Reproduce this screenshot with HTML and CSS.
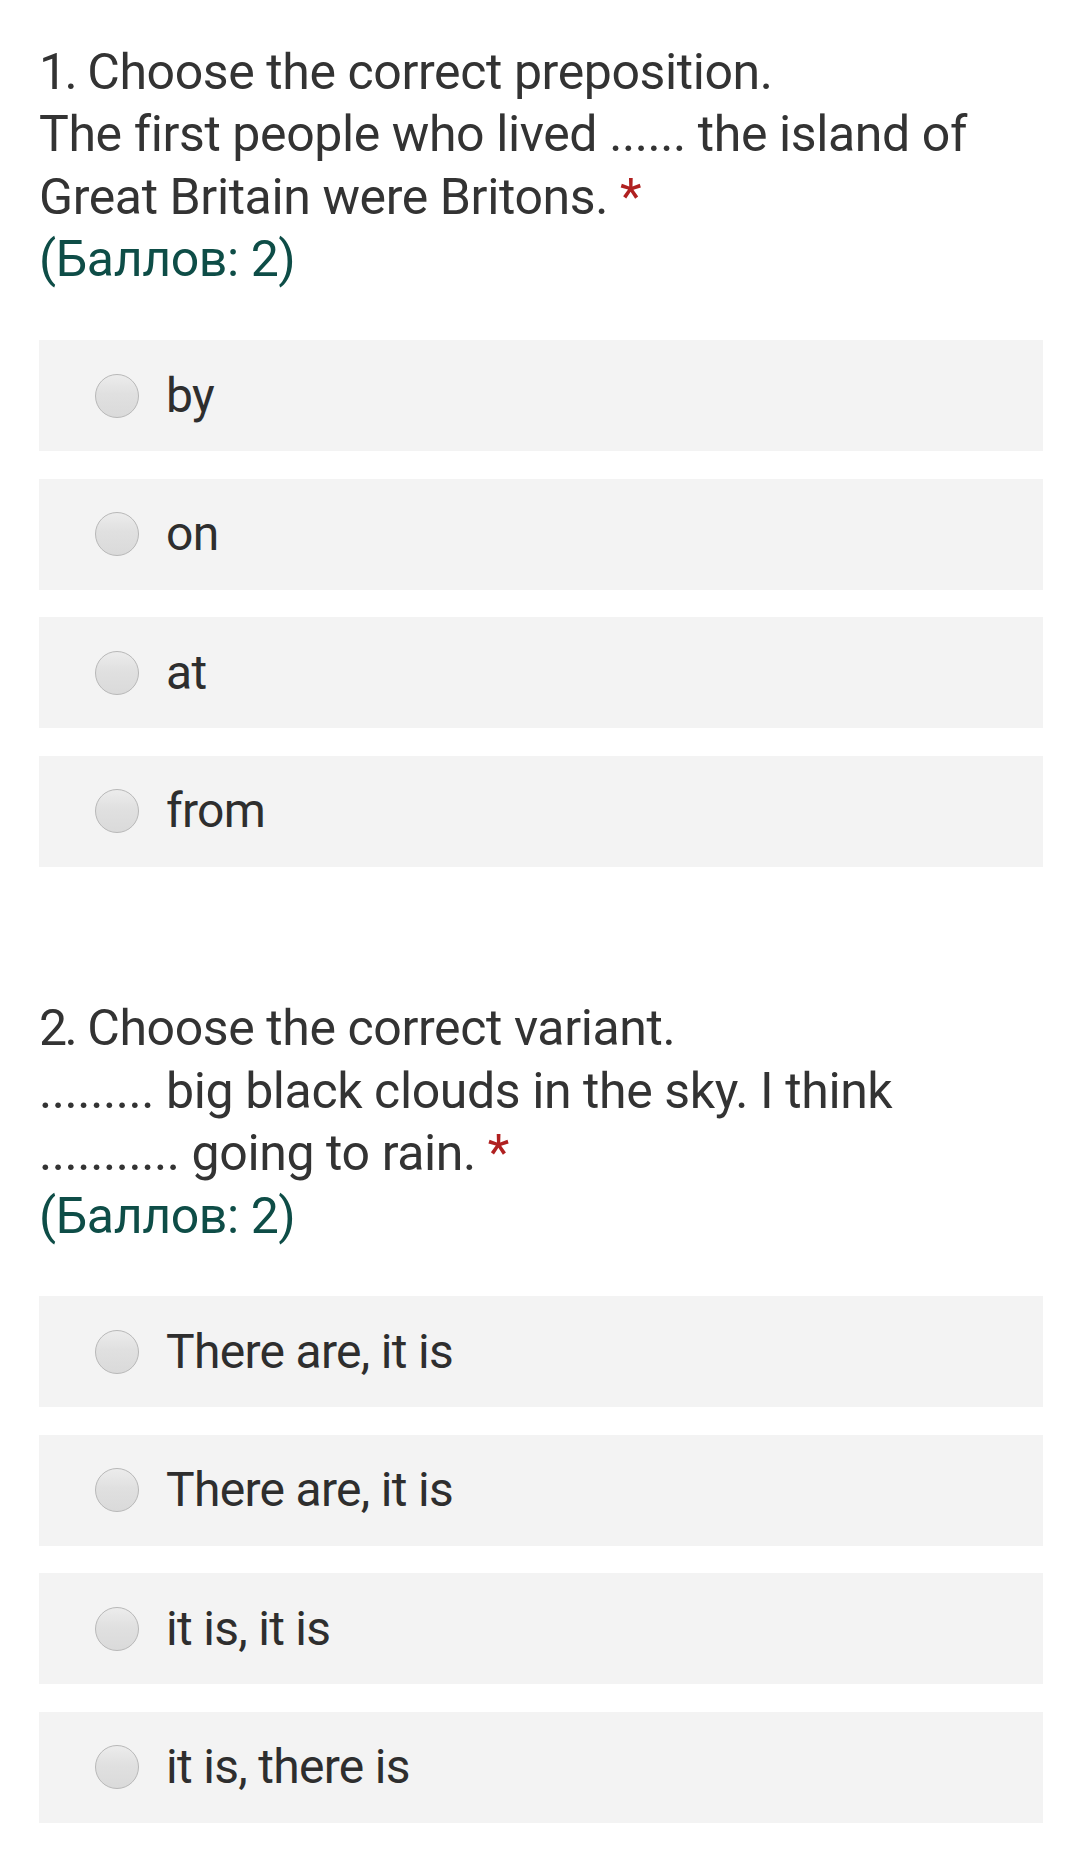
FILE: index.html
```html
<!DOCTYPE html>
<html lang="en">
<head>
<meta charset="utf-8">
<title>Quiz</title>
<link rel="stylesheet" href="styles.css">
</head>
<body>
<main class="page">
  <section class="question">
    <div class="q-title">
      <div><span class="num">1.</span> Choose the correct preposition.</div>
      <div>The first people who lived ...... the island of Great Britain were Britons. <span class="req">*</span></div>
      <div class="points">(Баллов: 2)</div>
    </div>
    <div class="options">
      <label class="option"><span class="radio"></span><span class="opt-text">by</span></label>
      <label class="option"><span class="radio"></span><span class="opt-text">on</span></label>
      <label class="option"><span class="radio"></span><span class="opt-text">at</span></label>
      <label class="option"><span class="radio"></span><span class="opt-text">from</span></label>
    </div>
  </section>
  <section class="question">
    <div class="q-title">
      <div><span class="num">2.</span> Choose the correct variant.</div>
      <div>......... big black clouds in the sky. I think ........... going to rain. <span class="req">*</span></div>
      <div class="points">(Баллов: 2)</div>
    </div>
    <div class="options">
      <label class="option"><span class="radio"></span><span class="opt-text">There are, it is</span></label>
      <label class="option"><span class="radio"></span><span class="opt-text">There are, it is</span></label>
      <label class="option"><span class="radio"></span><span class="opt-text">it is, it is</span></label>
      <label class="option"><span class="radio"></span><span class="opt-text">it is, there is</span></label>
    </div>
  </section>
</main>
</body>
</html>
```
FILE: styles.css
```css
html, body {
  margin: 0;
  padding: 0;
  background: #ffffff;
}

body {
  font-family: Roboto, "Noto Sans", "DejaVu Sans", sans-serif;
  color: #333333;
}

.page {
  padding: 41px 37px 0 39px;
  display: flex;
  flex-direction: column;
  gap: 130.8px;
}

.q-title {
  font-size: 50px;
  line-height: 62.4px;
  letter-spacing: -0.4px;
  padding-right: 10px;
}

.num {
  letter-spacing: -2.5px;
}

.req {
  color: #b02020;
}

.points {
  color: #0e4d47;
}

.options {
  margin-top: 49.4px;
  display: flex;
  flex-direction: column;
  gap: 27.5px;
}

.option {
  height: 111px;
  background: #f3f3f3;
  display: flex;
  align-items: center;
  padding-left: 56px;
  box-sizing: border-box;
}

.radio {
  width: 44px;
  height: 44px;
  border-radius: 50%;
  box-sizing: border-box;
  border: 1.5px solid #b8b8b8;
  background: linear-gradient(to bottom, #ececec 0%, #e0e0e0 45%, #dadada 100%);
  flex: none;
}

.opt-text {
  margin-left: 27px;
  font-size: 48px;
  line-height: 56px;
  letter-spacing: -0.7px;
  color: #2e2e2e;
}
```
